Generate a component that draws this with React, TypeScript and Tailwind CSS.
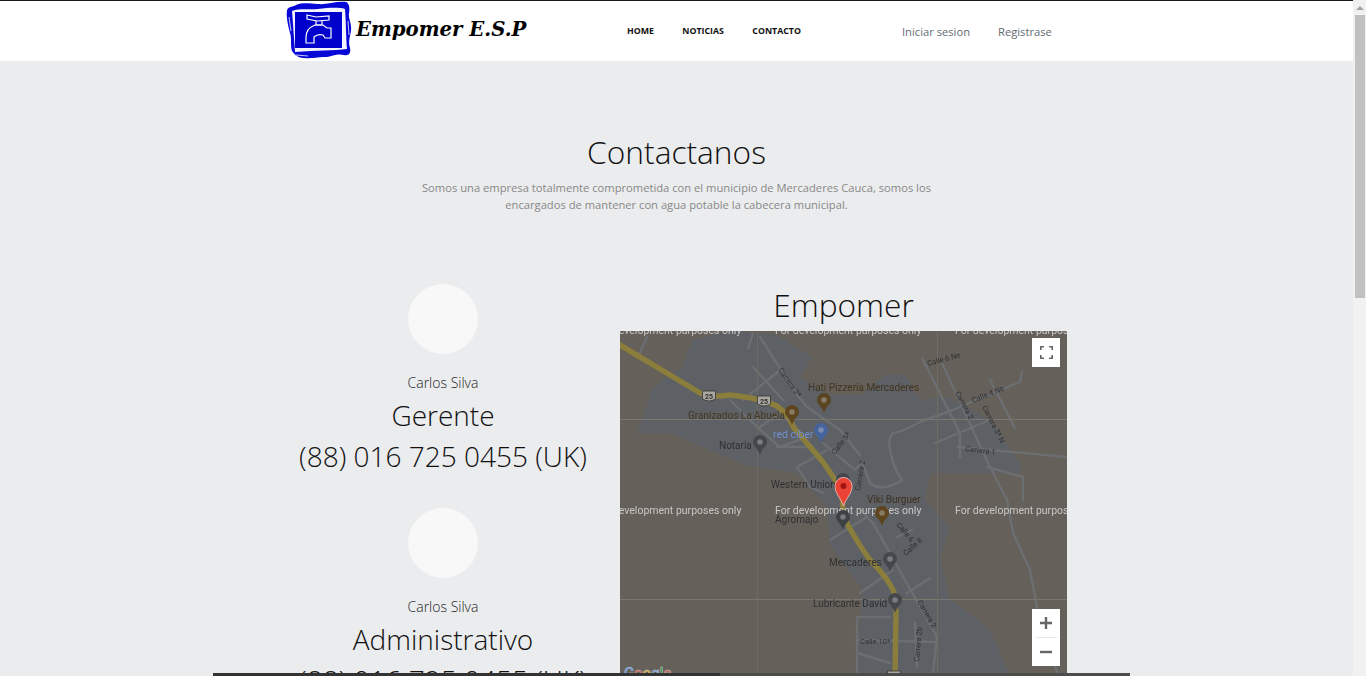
import React from "react";

const OS = "font-['Open_Sans',sans-serif]";

function Logo() {
  return (
    <svg width="70" height="60" viewBox="0 0 70 60" className="shrink-0 -ml-[1px]">
      <path d="M1 9 C3 5 7 6 10 4 C18 1 24 3 32 3 C40 4 50 0 60 1 C63 2 64 7 63 12 C62 18 66 22 65 30 C64 36 62 40 64 47 C65 52 63 55 58 54 C50 52 46 56 38 56 C30 56 26 58 18 57 C12 57 9 54 6 50 C4 44 6 38 4 32 C2 24 0 16 1 9 Z" fill="#0707d8" />
      <path d="M6 10 C14 7 24 9 32 8 C42 7 52 6 59 8 C60 20 60 36 61 48 C48 50 30 49 9 51 C8 38 7 22 6 10 Z" fill="#f4f4ff" />
      <path d="M3 16 L5 30 M10 54 L22 55 M62 20 L63 34" stroke="#f4f4ff" strokeWidth="0.8" fill="none" />
      <rect x="9" y="11" width="47" height="36" fill="#0000cc" />
      <g fill="none" stroke="#ffffff" strokeWidth="1.2">
        <path d="M21 14 L30 16 L43 15 L43 19 L31 20 L21 18 Z" />
        <path d="M30 20 L30 24 L36 24 L36 20" />
        <path d="M29 24 L37 24 L41 27 L45 27 L45 37 L39 37 L37 34 C33 33 30 34 28 36 L28 42 L20 42 L20 36 C20 30 24 26 29 24 Z" />
      </g>
    </svg>
  );
}

function Pin({ x, y, c }: { x: number; y: number; c: string }) {
  return (
    <g transform={`translate(${x} ${y})`}>
      <path d="M0 0 C-1.5 -6 -7 -9 -7 -13 A7 7 0 1 1 7 -13 C7 -9 1.5 -6 0 0 Z" fill={c} />
      <circle cx="0" cy="-13" r="2.8" fill="#bdbdbd" opacity="0.45" />
    </g>
  );
}

function MapLabel({ x, y, t, c = "#2f3033", s = 10, r = 0 }: { x: number; y: number; t: string; c?: string; s?: number; r?: number }) {
  return (
    <text x={x} y={y} fontSize={s} fill={c} fontFamily="Roboto, sans-serif" transform={r ? `rotate(${r} ${x} ${y})` : undefined}>
      {t}
    </text>
  );
}

function Shield({ x, y }: { x: number; y: number }) {
  return (
    <g>
      <path d={`M${x - 6.5} ${y - 5} H${x + 6.5} V${y + 3} Q${x} ${y + 7} ${x - 6.5} ${y + 3} Z`} fill="#a8a7a2" stroke="#34342f" strokeWidth="0.8" />
      <text x={x} y={y + 3} fontSize="7" textAnchor="middle" fill="#2d2d2a" fontWeight="700" fontFamily="Roboto, sans-serif">25</text>
    </g>
  );
}

function MapSvg() {
  const roads = [
    "M647 337 L638 357 M753 333 L748 348 M760 337 L797 395 L807 407 L840 430 L860 455",
    "M753 367 L783 400 M780 370 L743 400 M730 400 L757 427 L780 447 L807 437 M760 427 L780 413",
    "M777 447 L813 447 M823 443 L855 470 M797 467 L827 450 M797 467 L810 487 L823 493",
    "M922 358 L960 433 L960 457 M942 363 L988 463 L1007 500 L1013 533 L1030 570 L1037 607 L1057 672",
    "M902 480 C894 470 884 440 893 433 C905 432 912 425 925 420 L945 413 L1020 382 L1022 372",
    "M990 380 L1015 428 M935 443 L990 420 M958 447 L1067 457 M987 467 L1023 477 L1023 500",
    "M902 480 C890 488 878 490 870 483 L862 462 L855 470",
    "M830 540 L867 517 M865 515 L873 523 L937 637 L933 672 M860 593 L893 570 M907 593 L930 578 M897 537 L912 530",
    "M857 617 L857 672 M857 617 L890 617 M857 640 L937 642 M857 653 L890 663 M915 623 L917 667",
  ];
  const area =
    "M687 353 L693 340 L730 331 L777 335 L812 357 L800 377 L830 395 L862 395 L885 375 L905 375 L920 400 L947 397 L990 420 L1020 463 L1020 473 L963 473 L930 473 L925 500 L950 527 L940 557 L950 600 L965 610 L990 630 L1010 676 L855 676 L863 590 L830 545 L827 507 L797 473 L745 465 L670 433 L637 433 L653 387 L683 367 Z";
  const dev = [-182, -2, 178];
  return (
    <svg viewBox="620 331 447 345" className="block w-full h-full blur-[0.4px]">
      <rect x="610" y="321" width="467" height="365" fill="#656059" />
      <path d={area} fill="#5d6064" />
      {roads.map((d, i) => (
        <path key={i} d={d} fill="none" stroke="#6c6f72" strokeWidth="2.4" strokeLinejoin="round" strokeLinecap="round" />
      ))}
      <path d="M610 339 L700 393 Q712 398 730 395 Q760 398 777 406 Q788 414 794 428 L823 462 L842 490 L843 515 Q852 535 870 560 Q888 578 894 592 L896 612 L895 680" fill="none" stroke="#8b7e3c" strokeWidth="5.4" strokeLinejoin="round" />
      <path d="M610 419.5 H1077 M610 599.5 H1077" stroke="#7a7771" strokeWidth="1" />
      <path d="M757.5 321 V686 M937.5 321 V686" stroke="#6f6c66" strokeWidth="1" />
      <Shield x={709} y={396} />
      <Shield x={764} y={401} />
      <Shield x={894} y={676} />
      {dev.map((dx) => (
        <g key={dx}>
          <text x={dx + 777} y="334" fontSize="10.5" fill="#c8c8c6" fontFamily="Roboto, sans-serif">For development purposes only</text>
          <text x={dx + 777} y="514" fontSize="10.5" fill="#c8c8c6" fontFamily="Roboto, sans-serif">For development purposes only</text>
        </g>
      ))}
      <MapLabel x={778} y={370} t="Carrera 2ª" s={7.5} r={55} />
      <MapLabel x={808} y={391} t="Hati Pizzeria Mercaderes" c="#43351f" />
      <MapLabel x={688} y={419} t="Granizados La Abuela" c="#453823" />
      <MapLabel x={773} y={438} t="red ciber" c="#6f8fd0" s={10.5} />
      <MapLabel x={719} y={449} t="Notaria" />
      <MapLabel x={771} y={488} t="Western Union" />
      <MapLabel x={775} y={523} t="Agromajo" />
      <MapLabel x={867} y={503} t="Viki Burguer" c="#3e3220" />
      <MapLabel x={829} y={566} t="Mercaderes" />
      <MapLabel x={813} y={607} t="Lubricante David" />
      <MapLabel x={928} y={366} t="Calle 6 Ne" s={7.5} r={-15} />
      <MapLabel x={973} y={403} t="Calle 4 Ne" s={7.5} r={-22} />
      <MapLabel x={955} y={393} t="Carrera 2" s={7.5} r={62} />
      <MapLabel x={982} y={407} t="Carrera 3ª N" s={7.5} r={63} />
      <MapLabel x={965} y={451} t="Carrera 1" s={7.5} r={7} />
      <MapLabel x={835} y={455} t="Calle 5ª" s={7.5} r={-52} />
      <MapLabel x={860} y={491} t="Carrera 2" s={7.5} r={-80} />
      <MapLabel x={896} y={525} t="Calle 6" s={7.5} r={50} />
      <MapLabel x={906} y={556} t="Calle 8" s={7.5} r={-42} />
      <MapLabel x={917} y={602} t="Carrera 2" s={7.5} r={60} />
      <MapLabel x={919} y={662} t="Carrera 2b" s={7.5} r={-85} />
      <MapLabel x={860} y={644} t="Calle 10ª" s={7.5} />
      <Pin x={792} y={425} c="#5e451e" />
      <Pin x={824} y={413} c="#5a4523" />
      <Pin x={821} y={443} c="#44639f" />
      <Pin x={760} y={455} c="#44484d" />
      <Pin x={843} y={493} c="#44484d" />
      <Pin x={843} y={530} c="#3e4145" />
      <Pin x={882} y={526} c="#5e451e" />
      <Pin x={890} y={572} c="#44484d" />
      <Pin x={895} y={613} c="#44484d" />
      <path d="M843.5 506 C841 498 835 494 835 486 A8.5 8.5 0 1 1 852 486 C852 494 846 498 843.5 506 Z" fill="#ea4335" stroke="#f3c9c2" strokeWidth="0.8" />
      <circle cx="843.5" cy="486" r="3" fill="#a31510" />
      <text x="624" y="678" fontSize="15" fontWeight="500" fontFamily="Roboto, sans-serif" stroke="#c9ccce" strokeWidth="0.4">
        <tspan fill="#5b8fe0">G</tspan>
        <tspan fill="#d0503f">o</tspan>
        <tspan fill="#d8a92c">o</tspan>
        <tspan fill="#5b8fe0">g</tspan>
        <tspan fill="#44a04f">l</tspan>
        <tspan fill="#d0503f">e</tspan>
      </text>
    </svg>
  );
}

function Person({ role, gap }: { role: string; gap: string }) {
  return (
    <div className={`flex flex-col items-center ${gap}`}>
      <div className="w-[70px] h-[70px] rounded-full bg-[#f8f8f8]" />
      <div className="mt-[19px] text-[14px] leading-5 font-light text-[#222]">Carlos Silva</div>
      <div className="mt-[2px] text-[28px] leading-[41px] font-light text-[#111]">{role}</div>
      <div className="text-[28px] leading-[41px] font-light text-[#111]">(88) 016 725 0455 (UK)</div>
    </div>
  );
}

export default function App() {
  return (
    <div className={`relative flex h-[676px] w-[1366px] overflow-hidden bg-[#ebecee] ${OS}`}>
      <div className="w-[1353px] shrink-0 flex flex-col">
        <header className="h-[61px] shrink-0 bg-white border-t border-[#1b1b1b] flex items-center pl-[287px]">
          <Logo />
          <span className="text-[19.7px] font-bold italic text-black font-['DejaVu_Serif',serif] w-[271px] mt-[-3px] whitespace-nowrap">Empomer E.S.P</span>
          <nav className="flex gap-[28.4px] text-[8.8px] font-bold text-[#111] uppercase mt-[1px]">
            <span>Home</span>
            <span>Noticias</span>
            <span>Contacto</span>
          </nav>
          <div className="flex gap-[28px] text-[11.2px] text-[#5f6b73] ml-[101px] mt-[2px]">
            <span>Iniciar sesion</span>
            <span>Registrase</span>
          </div>
        </header>
        <section className="flex flex-col items-center pt-[71px]">
          <h1 className="text-[31.7px] leading-[40px] font-light text-[#111]">Contactanos</h1>
          <p className="mt-[7px] w-[520px] text-center text-[11.2px] leading-[17px] text-[#888]">
            Somos una empresa totalmente comprometida con el municipio de Mercaderes Cauca, somos los encargados de mantener con agua potable la cabecera municipal.
          </p>
        </section>
        <section className="flex pl-[283px] pt-[62px]">
          <div className="w-[320px] shrink-0 pt-[9px]">
            <Person role="Gerente" gap="" />
            <Person role="Administrativo" gap="mt-[31px]" />
          </div>
          <div className="ml-[17px] w-[447px] shrink-0 flex flex-col">
            <h2 className="text-[31.7px] pt-[5px] leading-[50px] font-light text-[#111] text-center h-[56px]">Empomer</h2>
            <div className="h-[345px] overflow-hidden">
              <MapSvg />
            </div>
          </div>
        </section>
      </div>
      <aside className="relative w-[13px] shrink-0 bg-[#f1f1f1] flex flex-col items-center">
        <div className="mt-[6px] w-0 h-0 border-l-[4px] border-r-[4px] border-b-[4px] border-l-transparent border-r-transparent border-b-[#a3a3a3]" />
        <div className="mt-[5px] w-[10px] h-[283px] bg-[#c1c1c1]" />
      </aside>
      <div className="absolute left-[1032px] top-[338px] w-[28px] h-[29px] bg-white flex items-center justify-center">
        <svg width="13" height="13" viewBox="0 0 13 13" fill="none" stroke="#666" strokeWidth="1.6">
          <path d="M0.8 4 V0.8 H4 M9 0.8 H12.2 V4 M12.2 9 V12.2 H9 M4 12.2 H0.8 V9" />
        </svg>
      </div>
      <div className="absolute left-[1032px] top-[609px] w-[28px] h-[57px] bg-white flex flex-col items-center">
        <div className="h-[28px] w-full flex items-center justify-center">
          <svg width="12" height="12" viewBox="0 0 12 12" fill="#666"><path d="M4.8 0 H7.2 V4.8 H12 V7.2 H7.2 V12 H4.8 V7.2 H0 V4.8 H4.8 Z" /></svg>
        </div>
        <div className="h-px w-[21px] bg-[#e6e6e6]" />
        <div className="h-[28px] w-full flex items-center justify-center">
          <svg width="12" height="12" viewBox="0 0 12 12" fill="#666"><path d="M0 4.8 H12 V7.2 H0 Z" /></svg>
        </div>
      </div>
      <div className="absolute left-[213px] bottom-0 w-[917px] h-[3px] bg-[#4c4c4a]">
        <div className="h-full w-[507px] bg-[#333]" />
      </div>
    </div>
  );
}
